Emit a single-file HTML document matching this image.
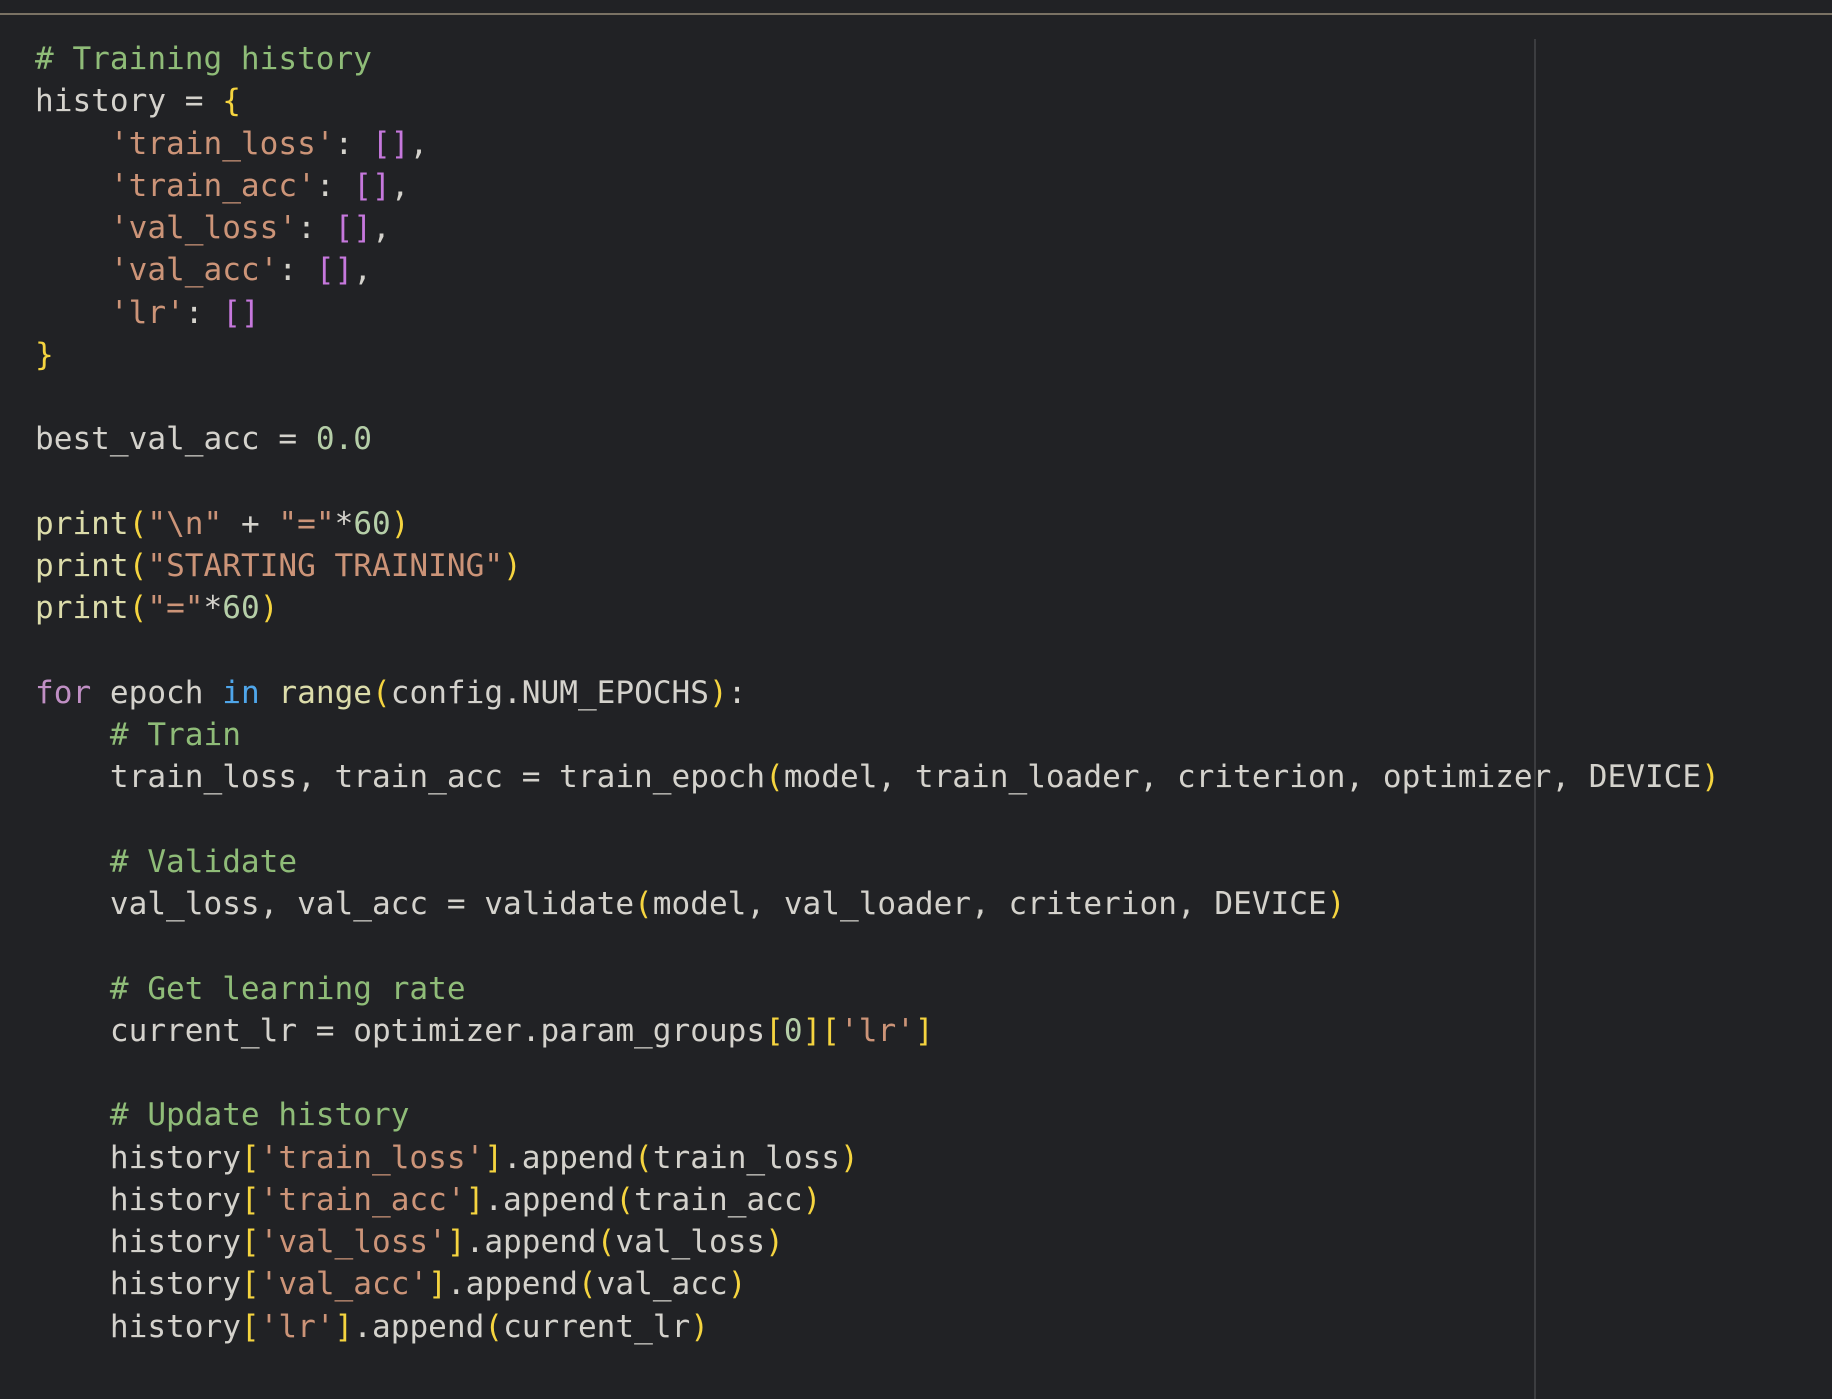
<!DOCTYPE html>
<html><head><meta charset="utf-8"><style>
html,body{margin:0;padding:0;background:#212225;width:1832px;height:1392px;overflow:hidden}
.top{position:absolute;left:0;top:13px;width:1832px;height:2px;background:#7a7264}
.rule{position:absolute;left:1534px;top:39px;width:2px;height:1360px;background:#3c3d40}
pre{position:absolute;left:35px;top:38px;margin:0;font-family:"DejaVu Sans Mono","Liberation Mono",monospace;font-size:31.1px;line-height:42.25px;color:#d4d2cc}
.c{color:#8fbc78}.s{color:#cc9478}.b{color:#c678dd}.y{color:#f5d43f}.k{color:#c08fc4}.i{color:#4fa6ea}.f{color:#dcdcaa}.n{color:#b5cea8}
</style></head><body>
<div class="top"></div><div class="rule"></div>
<pre><span class="c"># Training history</span>
history = <span class="y">{</span>
    <span class="s">'train_loss'</span>: <span class="b">[]</span>,
    <span class="s">'train_acc'</span>: <span class="b">[]</span>,
    <span class="s">'val_loss'</span>: <span class="b">[]</span>,
    <span class="s">'val_acc'</span>: <span class="b">[]</span>,
    <span class="s">'lr'</span>: <span class="b">[]</span>
<span class="y">}</span>

best_val_acc = <span class="n">0.0</span>

<span class="f">print</span><span class="y">(</span><span class="s">"\n"</span> + <span class="s">"="</span>*<span class="n">60</span><span class="y">)</span>
<span class="f">print</span><span class="y">(</span><span class="s">"STARTING TRAINING"</span><span class="y">)</span>
<span class="f">print</span><span class="y">(</span><span class="s">"="</span>*<span class="n">60</span><span class="y">)</span>

<span class="k">for</span> epoch <span class="i">in</span> <span class="f">range</span><span class="y">(</span>config.NUM_EPOCHS<span class="y">)</span>:
    <span class="c"># Train</span>
    train_loss, train_acc = train_epoch<span class="y">(</span>model, train_loader, criterion, optimizer, DEVICE<span class="y">)</span>

    <span class="c"># Validate</span>
    val_loss, val_acc = validate<span class="y">(</span>model, val_loader, criterion, DEVICE<span class="y">)</span>

    <span class="c"># Get learning rate</span>
    current_lr = optimizer.param_groups<span class="y">[</span><span class="n">0</span><span class="y">][</span><span class="s">'lr'</span><span class="y">]</span>

    <span class="c"># Update history</span>
    history<span class="y">[</span><span class="s">'train_loss'</span><span class="y">]</span>.append<span class="y">(</span>train_loss<span class="y">)</span>
    history<span class="y">[</span><span class="s">'train_acc'</span><span class="y">]</span>.append<span class="y">(</span>train_acc<span class="y">)</span>
    history<span class="y">[</span><span class="s">'val_loss'</span><span class="y">]</span>.append<span class="y">(</span>val_loss<span class="y">)</span>
    history<span class="y">[</span><span class="s">'val_acc'</span><span class="y">]</span>.append<span class="y">(</span>val_acc<span class="y">)</span>
    history<span class="y">[</span><span class="s">'lr'</span><span class="y">]</span>.append<span class="y">(</span>current_lr<span class="y">)</span>
</pre>
</body></html>
